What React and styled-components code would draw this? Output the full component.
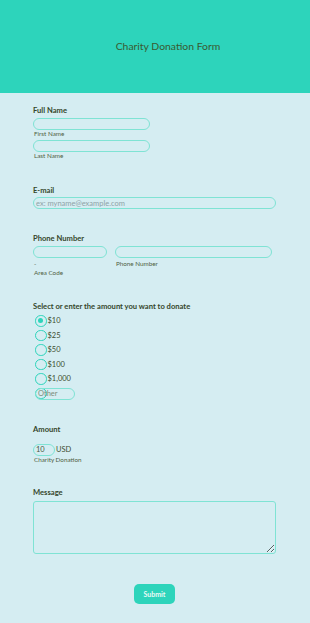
import React from "react";
import styled, { createGlobalStyle } from "styled-components";

const Global = createGlobalStyle`
  html, body { margin: 0; padding: 0; background: #d5edf2; }
  body { font-family: Lato, "Open Sans", sans-serif; width: 310px; }
  * { box-sizing: border-box; }
`;

const Page = styled.div`
  width: 310px;
  min-height: 623px;
  background: #d5edf2;
  display: flex;
  flex-direction: column;
`;

const Header = styled.header`
  height: 93px;
  background: #2dd4bb;
  display: flex;
  align-items: center;
  justify-content: center;
  padding-left: 26px;
  padding-bottom: 2px;
`;

const Title = styled.h1`
  margin: 0;
  font-size: 10.4px;
  font-weight: 400;
  color: #3a5a31;
`;

const Form = styled.form`
  display: flex;
  flex-direction: column;
  padding: 0 34px 0 33px;
`;

const Section = styled.div`
  display: flex;
  flex-direction: column;
  margin-top: ${(p) => p.$mt}px;
`;

const Label = styled.div`
  font-size: 7.6px;
  font-weight: 700;
  color: #34452a;
  line-height: 9px;
  margin-bottom: ${(p) => p.$mb ?? 3.5}px;
`;

const Input = styled.input`
  width: ${(p) => p.$w}px;
  height: 12px;
  border: 1px solid #7fe3d4;
  border-radius: 6px;
  background: transparent;
  font-family: Lato, sans-serif;
  font-size: 7.5px;
  color: #4a5a3e;
  padding: 0 2px;
  outline: none;
  &::placeholder { color: #8ea2a6; }
`;

const Sub = styled.div`
  font-size: 6.3px;
  color: #4f5e42;
  line-height: ${(p) => p.$lh || 7}px;
  margin: ${(p) => p.$m || "0.5px 0 2.5px 1px"};
`;

const Row = styled.div`
  display: flex;
  gap: ${(p) => p.$gap || 0}px;
  align-items: ${(p) => p.$align || "flex-start"};
`;

const Col = styled.div`
  display: flex;
  flex-direction: column;
`;

const RadioList = styled.div`
  display: flex;
  flex-direction: column;
  gap: 3px;
  padding-left: 2px;
`;

const RadioRow = styled.label`
  display: flex;
  align-items: center;
  gap: 1px;
  height: 11.5px;
  font-size: 7.5px;
  color: #3d4d30;
`;

const Circle = styled.span`
  width: 11.5px;
  height: 11.5px;
  border-radius: 50%;
  border: 1.2px solid #2dd4bb;
  display: flex;
  align-items: center;
  justify-content: center;
  flex-shrink: 0;
  &::after {
    content: "";
    width: 5px;
    height: 5px;
    border-radius: 50%;
    background: ${(p) => (p.$checked ? "#2dd4bb" : "transparent")};
  }
`;

const OtherWrap = styled.div`
  position: relative;
  height: 12px;
  width: 40px;
`;

const OtherCircle = styled(Circle)`
  position: absolute;
  left: 0;
  top: 0.25px;
`;

const OtherInput = styled(Input)`
  position: absolute;
  left: 0;
  top: 0;
  padding-left: 2px;
  &::placeholder { color: #7d8d7a; }
`;

const Currency = styled.span`
  font-size: 7.5px;
  color: #3d4d30;
  margin-left: 1px;
`;

const TextArea = styled.textarea`
  width: 243px;
  height: 53px;
  border: 1px solid #7fe3d4;
  border-radius: 3px;
  background: transparent;
  resize: both;
  outline: none;
`;

const Footer = styled.div`
  display: flex;
  justify-content: center;
  margin-top: 30px;
  padding-bottom: 18px;
`;

const Submit = styled.button`
  width: 41px;
  height: 20px;
  border: none;
  border-radius: 5px;
  background: #2dd4bb;
  color: #eafaf6;
  font-family: Lato, sans-serif;
  font-size: 7px;
  font-weight: 700;
  padding: 0;
`;

const amounts = ["$10", "$25", "$50", "$100", "$1,000"];

export default function App() {
  return (
    <Page>
      <Global />
      <Header>
        <Title>Charity Donation Form</Title>
      </Header>
      <Form onSubmit={(e) => e.preventDefault()}>
        <Section $mt={12.5}>
          <Label $mb={3}>Full Name</Label>
          <Input $w={117} />
          <Sub>First Name</Sub>
          <Input $w={117} />
          <Sub $m="0.5px 0 0 1px">Last Name</Sub>
        </Section>

        <Section $mt={27}>
          <Label $mb={2}>E-mail</Label>
          <Input $w={243} placeholder="ex: myname@example.com" />
        </Section>

        <Section $mt={25}>
          <Label $mb={3}>Phone Number</Label>
          <Row $gap={8}>
            <Col>
              <Input $w={74} />
              <Sub $m="1.5px 0 0 1px" $lh={8}>-</Sub>
              <Sub $m="1px 0 0 1px">Area Code</Sub>
            </Col>
            <Col>
              <Input $w={157} />
              <Sub $m="1.5px 0 0 1px">Phone Number</Sub>
            </Col>
          </Row>
        </Section>

        <Section $mt={26}>
          <Label $mb={4.5}>Select or enter the amount you want to donate</Label>
          <RadioList>
            {amounts.map((a, i) => (
              <RadioRow key={a}>
                <Circle $checked={i === 0} />
                {a}
              </RadioRow>
            ))}
            <OtherWrap>
              <OtherCircle />
              <OtherInput $w={40} placeholder="Other" />
            </OtherWrap>
          </RadioList>
        </Section>

        <Section $mt={25}>
          <Label $mb={10}>Amount</Label>
          <Row $align="center">
            <Input $w={22} defaultValue="10" />
            <Currency>USD</Currency>
          </Row>
          <Sub $m="0.5px 0 0 1px">Charity Donation</Sub>
        </Section>

        <Section $mt={25}>
          <Label>Message</Label>
          <TextArea />
        </Section>

        <Footer>
          <Submit type="submit">Submit</Submit>
        </Footer>
      </Form>
    </Page>
  );
}
